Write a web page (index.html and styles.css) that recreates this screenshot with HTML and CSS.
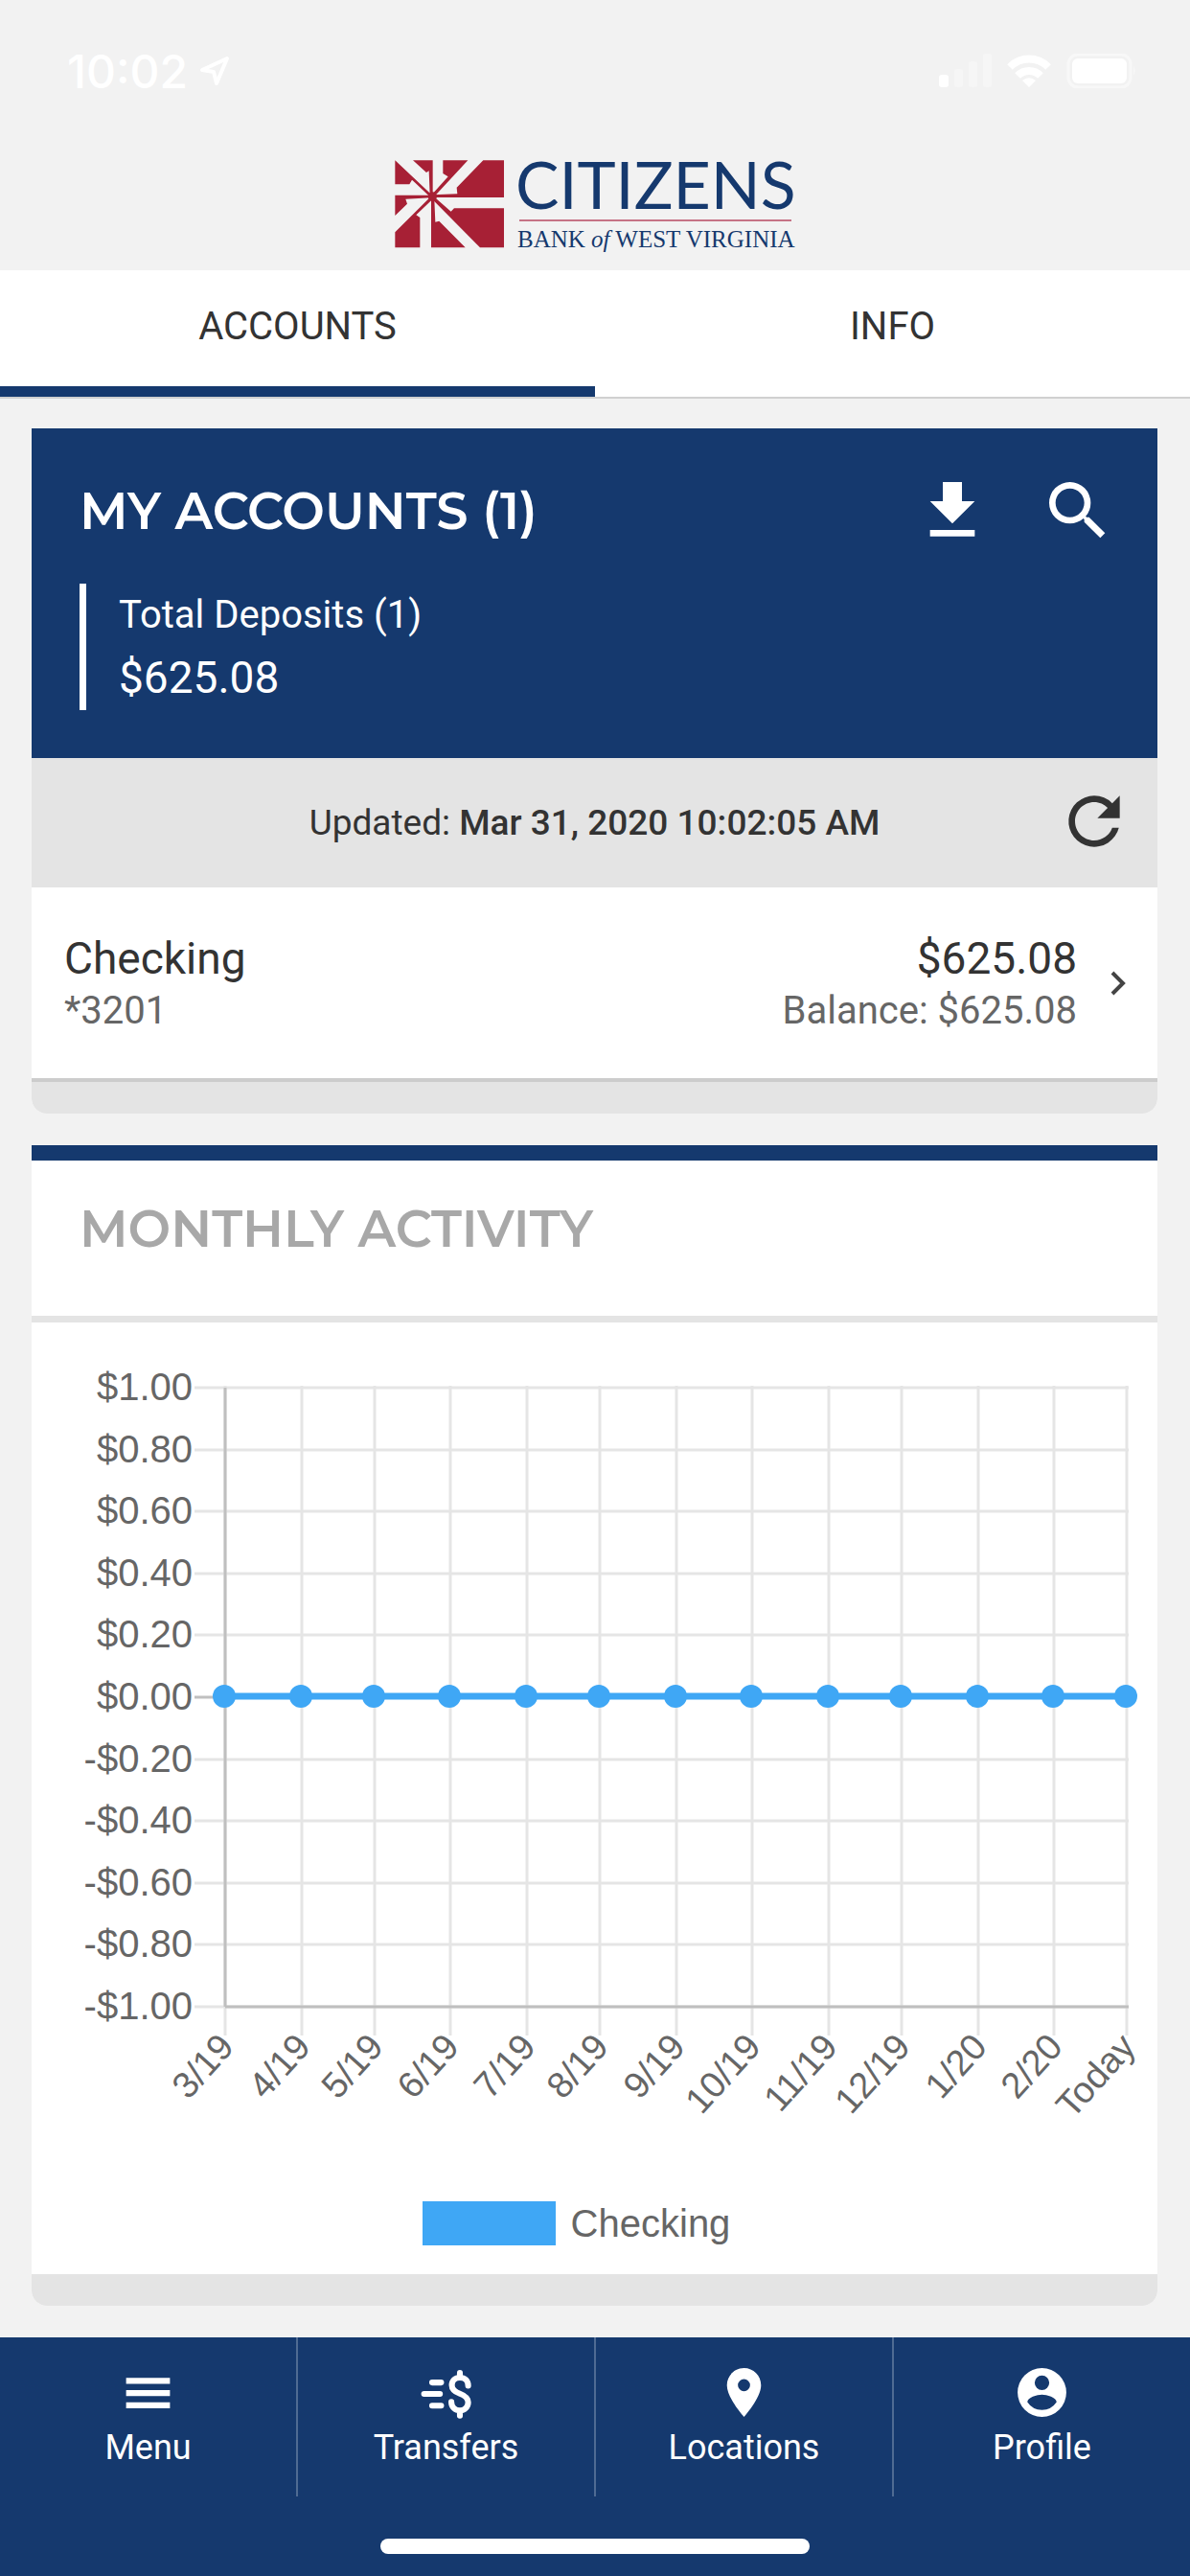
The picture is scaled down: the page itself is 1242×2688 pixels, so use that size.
FILE: index.html
```html
<!DOCTYPE html>
<html lang="en">
<head>
    <meta charset="UTF-8" />
    <meta name="viewport" content="width=device-width, initial-scale=1" />
    <title>Citizens Bank of West Virginia</title>
    <link rel="stylesheet" href="styles.css">
    <script src="chart.js" defer></script>
</head>
<body>
<header class="header">
    <div class="status">
        <div class="status_left">
            <span>10:02</span>
            <svg width="32" height="32" viewBox="0 0 32 32"><path d="M29 3L3 15l12 2 3 12z" fill="none" stroke="#fff" stroke-width="4" stroke-linejoin="round"/></svg>
        </div>
        <svg width="206" height="36" viewBox="0 0 206 36">
            <rect x="0" y="22" width="10" height="13" rx="3" fill="#fff"/>
            <g fill="#f6f6f6">
                <rect x="16" y="16" width="9" height="19" rx="3"/>
                <rect x="31" y="8" width="9" height="27" rx="3"/>
                <rect x="46" y="0" width="9" height="35" rx="3"/>
            </g>
            <g fill="none" stroke="#fff" stroke-width="8">
                <path d="M74 14a28 28 0 0 1 40 0"/>
                <path d="M82 23a17 17 0 0 1 24 0"/>
            </g>
            <path d="M87 28a10 10 0 0 1 14 0l-7 7z" fill="#fff"/>
            <rect x="135" y="1" width="65" height="34" rx="10" fill="none" stroke="#f8f8f8" stroke-width="3"/>
            <rect x="139" y="5" width="57" height="26" rx="6" fill="#fff"/>
            <path d="M203 13q3 5 0 10z" fill="#f8f8f8"/>
        </svg>
    </div>
    <svg class="logo" width="420" height="124" viewBox="0 -12 420 124" role="img" aria-label="Citizens Bank of West Virginia">
        <g transform="translate(-11 -1) scale(.3333)" fill="#a72035">
            <path d="M37 37L150 143 145 150 100 107 90 98 82 112H37z"/>
            <path d="M93 37h62v110h-9l-3-77-8 5z"/>
            <path d="M187 37h78L160 150l-7-7 50-55-16-10z"/>
            <path d="M313 37h65v116H155v-8l77-3-2-20z"/>
            <path d="M37 146h113v8l-80 4 5 15-38 37z"/>
            <path d="M37 262L147 152l7 7-51 49 12 8v94H37z"/>
            <path d="M150 160h10l3 70 12-3 82 83H150z"/>
            <path d="M303 310L153 158l6-7 53 46 10-10h156v123z"/>
            <circle cx="154" cy="150" r="14"/>
        </g>
        <text class="logo_name" x="127" y="62">CITIZENS</text>
        <path d="M131 74H415" stroke="#c67386" stroke-width="2"/>
        <text class="logo_sub" x="129" y="102">BANK <tspan font-style="italic">of</tspan> WEST VIRGINIA</text>
    </svg>
</header>

<nav class="tabs">
    <a class="active" href="#">ACCOUNTS</a>
    <a href="#">INFO</a>
</nav>

<main class="content">
    <section class="card">
        <div class="summary">
            <div class="summary_top">
                <h2>MY ACCOUNTS (1)</h2>
                <div class="tools">
                    <button type="button" aria-label="Download">
                        <svg viewBox="0 0 24 24"><path d="M19 9h-4V3H9v6H5l7 7 7-7zM5 18v2h14v-2H5z"/></svg>
                    </button>
                    <button type="button" aria-label="Search">
                        <svg viewBox="0 0 24 24"><path d="M15.500 14h-.79l-.28-.27A6.471 6.471 0 0 0 16 9.500 6.500 6.500 0 1 0 9.500 16c1.610 0 3.090-.59 4.230-1.570l.27.28v.79l5 4.990L20.490 19l-4.990-5zm-6 0C7.010 14 5 11.990 5 9.500S7.010 5 9.500 5 14 7.010 14 9.500 11.990 14 9.500 14z"/></svg>
                    </button>
                </div>
            </div>
            <div class="deposits">
                <p>Total Deposits (1)</p>
                <p class="amount">$625.08</p>
            </div>
        </div>
        <div class="updated">
            <p>Updated: <b>Mar 31, 2020 10:02:05 AM</b></p>
            <button type="button" aria-label="Refresh">
                <svg viewBox="0 0 24 24"><path d="M17.650 6.350A7.958 7.958 0 0 0 12 4a8 8 0 1 0 7.730 10h-2.080A5.990 5.990 0 0 1 12 18c-3.310 0-6-2.690-6-6s2.690-6 6-6c1.660 0 3.140.69 4.220 1.780L13 11h7V4l-2.350 2.350z"/></svg>
            </button>
        </div>
        <a class="account" href="#">
            <div>
                <p class="amount">Checking</p>
                <p class="note">*3201</p>
            </div>
            <div class="account_balance">
                <p class="amount">$625.08</p>
                <p class="note">Balance: $625.08</p>
            </div>
            <svg width="16" height="26" viewBox="0 0 16 26"><path d="M2 2l11 11L2 24" fill="none" stroke="#444" stroke-width="4"/></svg>
        </a>
        <div class="card_foot"></div>
    </section>

    <section class="card activity">
        <h2>MONTHLY ACTIVITY</h2>
        <svg id="chart" class="chart" viewBox="0 0 1175 884" role="img" aria-label="Monthly activity"></svg>
        <div class="legend"><i></i>Checking</div>
        <div class="card_foot"></div>
    </section>
</main>

<nav class="bottom">
    <div class="bottom_list">
        <a href="#">
            <svg viewBox="0 0 24 24"><path d="M3 6h18v2.500H3zM3 11h18v2.500H3zM3 16h18v2.500H3z"/></svg>
            Menu
        </a>
        <a href="#">
            <svg viewBox="0 0 24 24">
                <g fill="none" stroke="#fff" stroke-width="2.400" stroke-linecap="round">
                    <path d="M6.300 7.900h3.700M3 12.600h6.500M6.300 17.400h3.700"/>
                    <path d="M21.100 9.200C21.100 7.200 19.700 5.900 17.700 5.900S14.400 7.200 14.400 9c0 2 1.500 2.800 3.300 3.500s3.400 1.600 3.400 3.500-1.500 3.400-3.400 3.400-3.500-1.400-3.500-3.500M17.700 4v1.500M17.700 20v1.500"/>
                </g>
            </svg>
            Transfers
        </a>
        <a href="#">
            <svg viewBox="0 0 24 24"><path d="M12 2C8.130 2 5 5.130 5 9c0 5.250 7 13 7 13s7-7.750 7-13c0-3.870-3.130-7-7-7zm0 9.500a2.500 2.500 0 0 1 0-5 2.500 2.500 0 0 1 0 5z"/></svg>
            Locations
        </a>
        <a href="#">
            <svg viewBox="0 0 24 24"><path d="M12 2a10 10 0 1 0 0 20 10 10 0 0 0 0-20zm0 3a3 3 0 1 1 0 6 3 3 0 0 1 0-6zm0 14.200a7.200 7.200 0 0 1-6-3.220c.03-1.990 4-3.080 6-3.080 1.990 0 5.970 1.090 6 3.080a7.200 7.200 0 0 1-6 3.220z"/></svg>
            Profile
        </a>
    </div>
    <div class="home_bar"></div>
</nav>
</body>
</html>
```
FILE: chart.js
```js
// monthly activity chart
var months = [
    ['3/19', 202], ['4/19', 282], ['5/19', 358], ['6/19', 437], ['7/19', 517],
    ['8/19', 593], ['9/19', 673], ['10/19', 752], ['11/19', 832], ['12/19', 908],
    ['1/20', 988], ['2/20', 1067], ['Today', 1143]
];
var top0 = 68;
var bottom = 714;
var zero = (top0 + bottom) / 2;
var first = months[0][1];
var last = months[months.length - 1][1];
var out = '';

function line(x1, y1, x2, y2, cls) {
    out += '<line class="' + cls + '" x1="' + x1 + '" y1="' + y1 + '" x2="' + x2 + '" y2="' + y2 + '"/>';
}

// horizontal lines and dollar labels
for (var i = 0; i <= 10; i++) {
    var y = Math.round(top0 + (bottom - top0) * i / 10);
    var value = (10 - i * 2) / 10;
    var label = (value < 0 ? '-$' : '$') + Math.abs(value).toFixed(2);
    line(170, y, last + 2, y, i == 5 ? 'axis' : 'grid');
    out += '<text x="168" y="' + (y + 13) + '" text-anchor="end">' + label + '</text>';
}

// vertical lines and month labels
for (var i = 0; i < months.length; i++) {
    var x = months[i][1];
    line(x, top0 - 2, x, bottom + 30, 'grid');
    out += '<text class="month" text-anchor="end" transform="translate(' + (x + 11) + ' ' + (bottom + 43) + ') rotate(-48)">' + months[i][0] + '</text>';
}
line(first, top0, first, bottom, 'axis');
line(first, bottom, last + 2, bottom, 'axis');

// every month is at $0.00
line(first, zero - 1, last, zero - 1, 'series');
for (var i = 0; i < months.length; i++) {
    out += '<circle class="point" cx="' + (months[i][1] - 1) + '" cy="' + (zero - 1) + '" r="12"/>';
}

document.getElementById('chart').innerHTML = out;
```
FILE: styles.css
```css
* {
    box-sizing: border-box;
}
body {
    margin: 0;
    min-height: 100vh;
    display: flex;
    flex-direction: column;
    background: #f2f2f2;
    color: #333;
    font-family: Roboto, "Liberation Sans", sans-serif;
    font-size: 40px;
    line-height: 46px;
}
h2, p {
    margin: 0;
    font-weight: normal;
}
a {
    color: inherit;
    text-decoration: none;
}
button {
    display: flex;
    padding: 0;
    border: 0;
    background: none;
    color: inherit;
}
button svg {
    width: 80px;
    height: 80px;
    fill: currentColor;
}

.header {
    padding: 56px 0 14px;
}
.status {
    height: 36px;
    margin-bottom: 52px;
    padding: 0 56px 0 70px;
    display: flex;
    align-items: center;
    justify-content: space-between;
    color: #fff;
    font: 500 48px Inter, sans-serif;
}
.status_left {
    display: flex;
    align-items: center;
    gap: 12px;
}
.logo {
    display: block;
    margin: 0 auto;
}
.logo_name {
    font: 68px Lato, sans-serif;
    fill: #15396e;
}
.logo_sub {
    font: 25px "Liberation Serif", serif;
    fill: #15396e;
}

.tabs {
    display: flex;
    background: #fff;
    border-bottom: 2px solid #d0d0d0;
}
.tabs a {
    flex: 1;
    padding: 36px 0 39px;
    border-bottom: 11px solid #fff;
    text-align: center;
}
.tabs .active {
    border-color: #15396e;
}

.content {
    padding: 31px 34px 33px 33px;
    display: flex;
    flex-direction: column;
    gap: 33px;
}
.card {
    border-radius: 0 0 16px 16px;
    background: #fff;
    overflow: hidden;
}
.card h2 {
    font: 600 53px/60px Montserrat, Inter, sans-serif;
}
.card_foot {
    height: 33px;
    background: #e4e4e4;
}
.summary {
    padding: 46px 43px 50px 50px;
    background: #15396e;
    color: #fff;
}
.summary_top {
    display: flex;
    align-items: center;
    justify-content: space-between;
}
.tools {
    display: flex;
    gap: 51px;
}
.deposits {
    margin-top: 36px;
    padding: 10px 0 7px 34px;
    border-left: 7px solid #fff;
}
.amount {
    font-size: 46px;
    line-height: 54px;
}
.deposits .amount {
    margin-top: 15px;
}
.updated {
    height: 135px;
    padding: 0 26px 4px 0;
    display: flex;
    align-items: center;
    background: #e4e4e4;
    font-size: 37px;
}
.updated p {
    flex: 1;
    padding: 4px 0 0 106px;
    text-align: center;
}
.updated b {
    font-weight: 500;
}
.account {
    height: 203px;
    padding: 0 33px 0 34px;
    display: flex;
    align-items: center;
    border-bottom: 4px solid #ccc;
}
.account_balance {
    margin-left: auto;
    padding-right: 35px;
    text-align: right;
}
.note {
    margin-top: 5px;
    color: #666;
}

.activity {
    border-top: 16px solid #15396e;
}
.activity h2 {
    padding: 41px 50px 61px;
    border-bottom: 7px solid #e4e4e4;
    color: #a8a8a8;
}
.chart {
    display: block;
    width: 100%;
}
.chart text {
    font: 40px "Liberation Sans", sans-serif;
    fill: #666;
}
.chart .month {
    font-size: 38px;
}
.grid {
    stroke: #e5e5e5;
    stroke-width: 3;
}
.axis {
    stroke: #bfbfbf;
    stroke-width: 3;
}
.series {
    stroke: #3fa7f5;
    stroke-width: 7;
}
.point {
    fill: #3fa7f5;
}
.legend {
    padding: 33px 38px 30px 0;
    display: flex;
    justify-content: center;
    gap: 16px;
    color: #666;
    font-family: "Liberation Sans", sans-serif;
}
.legend i {
    width: 139px;
    height: 46px;
    background: #3fa7f5;
}

.bottom {
    margin-top: auto;
    padding-bottom: 24px;
    background: #15396e;
    color: #fff;
}
.bottom_list {
    display: flex;
}
.bottom_list a {
    flex: 1;
    height: 166px;
    padding-top: 27px;
    display: flex;
    flex-direction: column;
    align-items: center;
    gap: 5px;
    font-size: 36px;
    line-height: 44px;
}
.bottom_list a + a {
    border-left: 2px solid #4f6b93;
}
.bottom_list svg {
    width: 61px;
    height: 61px;
    fill: #fff;
}
.home_bar {
    width: 36%;
    height: 16px;
    margin: 44px auto 0;
    border-radius: 8px;
    background: #fff;
}
```
